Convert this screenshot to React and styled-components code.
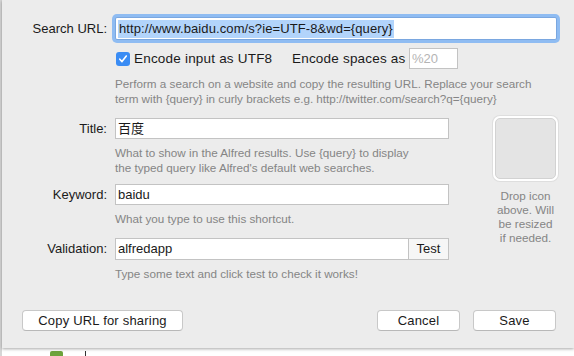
import React from 'react';
import styled, { createGlobalStyle } from 'styled-components';

const GlobalStyle = createGlobalStyle`
  html, body {
    margin: 0;
    padding: 0;
    background: #ffffff;
    font-family: "Liberation Sans", Arial, "Noto Sans CJK SC", sans-serif;
    color: #1a1a1a;
  }
`;

const Page = styled.div`
  width: 574px;
  height: 356px;
  overflow: hidden;
  background: #d6d6d6;
  display: flex;
  flex-direction: column;
`;

const Dialog = styled.div`
  margin-left: 2px;
  height: 348px;
  flex-shrink: 0;
  box-sizing: border-box;
  background: #ececec;
  padding: 17px 17px 17px 0;
  box-shadow: 0 1px 3px rgba(0, 0, 0, 0.35);
  display: flex;
  flex-direction: column;
  position: relative;
  z-index: 1;
`;

const Behind = styled.div`
  flex: 1;
  margin-left: 2px;
  background: #ffffff;
  display: flex;
  align-items: flex-start;
  padding-left: 48px;
  padding-top: 3px;
  gap: 22px;
`;

const GreenIcon = styled.div`
  width: 13px;
  height: 10px;
  border-radius: 2px;
  background: #6da33c;
`;

const Tick = styled.div`
  width: 1px;
  height: 6px;
  background: #333;
`;

const Grid = styled.div`
  display: grid;
  grid-template-columns: 105px ${p => p.$width || '1fr'};
  column-gap: 8px;
  align-items: center;
`;

const Label = styled.div`
  font-size: 13px;
  text-align: right;
  line-height: ${p => p.$h || 21}px;
`;

const Input = styled.div`
  box-sizing: border-box;
  height: ${p => p.$h || 21}px;
  background: #fff;
  border: 1px solid ${p => (p.$focus ? '#7aa7e0' : '#c3c3c3')};
  box-shadow: ${p => (p.$focus ? '0 0 0 3px #8fbcf2' : 'none')};
  border-radius: ${p => (p.$focus ? '2px' : '0')};
  font-size: 13px;
  line-height: ${p => (p.$h || 21) - 2}px;
  padding: 0 2px;
  white-space: nowrap;
  overflow: hidden;
  color: ${p => (p.$placeholder ? '#b4b4b4' : '#1a1a1a')};
  width: ${p => p.$w || 'auto'};
  flex-shrink: 0;
`;

const Selected = styled.span`
  background: #b2d4fb;
  padding: 1px 1px 2px;
  letter-spacing: 0.1px;
`;

const OptionRow = styled.div`
  display: flex;
  align-items: center;
  margin-top: 8px;
  height: 21px;
`;

const Checkbox = styled.div`
  width: 14px;
  height: 14px;
  border-radius: 3px;
  background: #3a8cf4;
  margin-left: 1px;
  margin-right: 4px;
  display: flex;
  align-items: center;
  justify-content: center;
`;

const OptionText = styled.span`
  font-size: 13.5px;
  letter-spacing: 0.2px;
  width: ${p => p.$w}px;
  flex-shrink: 0;
`;

const Help = styled.div`
  font-size: 11.7px;
  line-height: 14.5px;
  color: #858585;
  white-space: pre-line;
  margin-top: ${p => p.$mt || 0}px;
  margin-bottom: ${p => p.$mb || 0}px;
  grid-column: 2;
`;

const Body = styled.div`
  display: flex;
  margin-top: 10px;
`;

const Form = styled.div`
  padding-top: 2px;
`;

const Side = styled.div`
  margin-left: 44px;
  width: 65px;
  display: flex;
  flex-direction: column;
  align-items: center;
`;

const Well = styled.div`
  box-sizing: border-box;
  width: 65px;
  height: 65px;
  border-radius: 7px;
  background: #fff;
  padding: 2px;
  box-shadow: 0 0 0 1px #dedede;

  & > div {
    width: 100%;
    height: 100%;
    box-sizing: border-box;
    border-radius: 5px;
    background: #e4e4e4;
    border: 1px solid #d2d2d2;
  }
`;

const WellText = styled.div`
  margin-top: 8px;
  font-size: 11.7px;
  line-height: 14px;
  color: #858585;
  text-align: center;
  white-space: pre-line;
  width: 80px;
`;

const Combo = styled.div`
  display: flex;
`;

const TestButton = styled.div`
  box-sizing: border-box;
  width: 40px;
  height: 22px;
  border: 1px solid #c3c3c3;
  border-left: none;
  background: #f6f6f6;
  font-size: 13px;
  line-height: 20px;
  text-align: center;
`;

const Footer = styled.div`
  margin-top: auto;
  display: flex;
  align-items: center;
  padding-left: 20px;
  padding-right: 1px;
  gap: 13px;
`;

const Button = styled.div`
  box-sizing: border-box;
  width: ${p => p.$w}px;
  height: 21px;
  background: #fff;
  border: 1px solid #c8c8c8;
  border-bottom-color: #b8b8b8;
  border-radius: 4px;
  font-size: 13px;
  letter-spacing: 0.2px;
  line-height: 19px;
  text-align: center;
  margin-left: ${p => (p.$push ? 'auto' : '0')};
`;

export default function App() {
  return (
    <Page>
      <GlobalStyle />
      <Dialog>
        <Grid>
          <Label $h={23}>Search URL:</Label>
          <Input $focus $h={23}>
            <Selected>http://www.baidu.com/s?ie=UTF-8&amp;wd={'{query}'}</Selected>
          </Input>
          <span />
          <OptionRow>
            <Checkbox>
              <svg width="10" height="10" viewBox="0 0 10 10">
                <path d="M1.8 5.2 L4 7.6 L8.3 2" fill="none" stroke="#fff" strokeWidth="1.6" strokeLinecap="round" strokeLinejoin="round" />
              </svg>
            </Checkbox>
            <OptionText $w={158}>Encode input as UTF8</OptionText>
            <OptionText $w={117}>Encode spaces as</OptionText>
            <Input $placeholder $w="49px">%20</Input>
          </OptionRow>
          <Help $mt={8}>
            {'Perform a search on a website and copy the resulting URL. Replace your search\nterm with {query} in curly brackets e.g. http://twitter.com/search?q={query}'}
          </Help>
        </Grid>

        <Body>
          <Form>
            <Grid $width="334px">
              <Label>Title:</Label>
              <Input>百度</Input>
              <Help $mt={7} $mb={9}>
                {"What to show in the Alfred results. Use {query} to display\nthe typed query like Alfred's default web searches."}
              </Help>
              <Label>Keyword:</Label>
              <Input>baidu</Input>
              <Help $mt={7} $mb={11}>What you type to use this shortcut.</Help>
              <Label $h={22}>Validation:</Label>
              <Combo>
                <Input $h={22} $w="294px">alfredapp</Input>
                <TestButton>Test</TestButton>
              </Combo>
              <Help $mt={7}>Type some text and click test to check it works!</Help>
            </Grid>
          </Form>
          <Side>
            <Well>
              <div />
            </Well>
            <WellText>{'Drop icon\nabove. Will\nbe resized\nif needed.'}</WellText>
          </Side>
        </Body>

        <Footer>
          <Button $w={161}>Copy URL for sharing</Button>
          <Button $w={83} $push>Cancel</Button>
          <Button $w={83}>Save</Button>
        </Footer>
      </Dialog>
      <Behind>
        <GreenIcon />
        <Tick />
      </Behind>
    </Page>
  );
}
